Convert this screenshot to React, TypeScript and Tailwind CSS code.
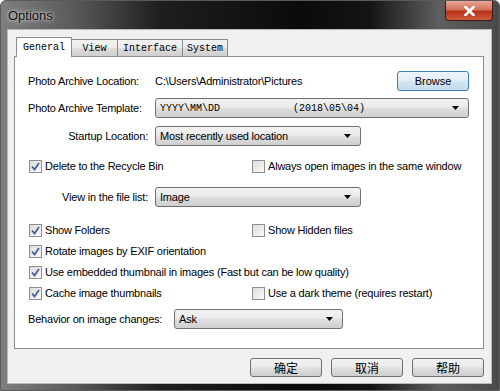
import React from "react";

const font = { fontFamily: '"Liberation Sans", Arial, sans-serif' };
const mono = { fontFamily: '"Liberation Mono", "Courier New", monospace' };

function Check({ checked, label }: { checked?: boolean; label: string }) {
  return (
    <div className="flex items-center gap-[3px] h-[20px]">
      <div className="w-[13px] h-[13px] border border-[#8e8f8f] bg-gradient-to-br from-[#dcdcdc] to-[#fbfbfb] flex items-center justify-center">
        {checked && (
          <svg width="9" height="9" viewBox="0 0 9 9">
            <path d="M1 4.5 L3.5 7.5 L8 1" fill="none" stroke="#4a5f97" strokeWidth="1.8" />
          </svg>
        )}
      </div>
      <span className="text-[11px] tracking-[-0.2px] text-black whitespace-nowrap">{label}</span>
    </div>
  );
}

function Select({ width, children }: { width: string; children: React.ReactNode }) {
  return (
    <div
      className={`${width} h-[20px] rounded-[3px] border border-[#707070] bg-[linear-gradient(#f2f2f2,#ebebeb_45%,#dddddd_55%,#cfcfcf)] flex items-center pl-[4px] pr-[9px]`}
    >
      <div className="flex-1 flex items-center text-[11px] tracking-[-0.2px] text-black whitespace-nowrap">{children}</div>
      <svg width="7" height="4" viewBox="0 0 7 4">
        <path d="M0 0 H7 L3.5 4 Z" fill="#000" />
      </svg>
    </div>
  );
}

function Tab({ label, active, width }: { label: string; active?: boolean; width: string }) {
  if (active) {
    return (
      <div
        className={`${width} h-[20px] -mb-px relative z-10 bg-white border border-b-0 border-[#898c95] flex items-center justify-center text-[10px] text-black`}
        style={mono}
      >
        {label}
      </div>
    );
  }
  return (
    <div
      className={`${width} h-[17px] bg-[linear-gradient(#f2f2f2,#ebebeb_50%,#dddddd_50%,#cfcfcf)] border border-b-0 border-[#898c95] flex items-center justify-center text-[10px] text-black -ml-px`}
      style={mono}
    >
      {label}
    </div>
  );
}

function DlgButton({ label }: { label: string }) {
  return (
    <div
      className="w-[72px] h-[19px] rounded-[3px] border border-[#707070] bg-[linear-gradient(#f2f2f2,#ebebeb_45%,#dddddd_55%,#cfcfcf)] flex items-center justify-center text-[12px] text-black"
      style={{ fontFamily: '"Noto Sans CJK SC", sans-serif' }}
    >
      {label}
    </div>
  );
}

export default function App() {
  return (
    <div
      className="w-[500px] h-[391px] rounded-t-[6px] border border-[#5a5a5a] bg-[linear-gradient(90deg,#7e7e7e_0%,#5c5c5c_14%,#1e1e1e_32%,#0b0b0b_60%,#141414_74%,#5f5f5f_88%,#4a4a4a_100%)] flex flex-col overflow-hidden"
      style={font}
    >
      {/* title bar */}
      <div className="h-[28px] flex items-start justify-between">
        <div className="pl-[7px] pt-[5px] text-[13px] text-[#111] [text-shadow:0_0_6px_#d0d0d0,0_0_3px_#d8d8d8]">Options</div>
        <div className="mr-[6px] w-[48px] h-[20px] rounded-b-[4px] border border-t-0 border-[#3a1a14] bg-[linear-gradient(#e8a493,#d2745d_45%,#b8321a_55%,#cf5a3d)] flex items-center justify-center">
          <svg width="11" height="10" viewBox="0 0 11 10">
            <path d="M1.5 1 L9.5 9 M9.5 1 L1.5 9" stroke="#fff" strokeWidth="2.6" strokeLinecap="square" />
          </svg>
        </div>
      </div>

      {/* client */}
      <div className="ml-[6px] mr-[7px] h-[355px] border border-[#b9b9b9] bg-[#f0f0f0] flex flex-col px-[6px]">
        {/* tabs */}
        <div className="flex items-end h-[26px] pl-[2px]">
          <Tab label="General" active width="w-[56px]" />
          <Tab label="View" width="w-[47px]" />
          <Tab label="Interface" width="w-[66px]" />
          <Tab label="System" width="w-[46px]" />
        </div>

        {/* panel */}
        <div className="h-[293px] w-[470px] bg-white border border-[#898c95] flex flex-col pl-[13px] text-[11px] tracking-[-0.2px] text-black">
          <div className="mt-[14px] h-[20px] flex items-center">
            <div className="w-[127px]">Photo Archive Location:</div>
            <div className="flex-1">C:\Users\Administrator\Pictures</div>
            <div className="mr-[14px] w-[72px] h-[20px] rounded-[3px] border border-[#3c7fb1] bg-[linear-gradient(#eef5fa,#e3eef7_45%,#d2e4f1_55%,#c5dbec)] flex items-center justify-center tracking-normal">
              Browse
            </div>
          </div>

          <div className="mt-[7px] h-[20px] flex items-center">
            <div className="w-[127px]">Photo Archive Template:</div>
            <Select width="w-[314px]">
              <span className="text-[10px] tracking-normal w-[133px]" style={mono}>YYYY\MM\DD</span>
              <span className="text-[10px] tracking-normal" style={mono}>(2018\05\04)</span>
            </Select>
          </div>

          <div className="mt-[8px] h-[20px] flex items-center">
            <div className="w-[127px] text-right pr-[7px]">Startup Location:</div>
            <Select width="w-[206px]">Most recently used location</Select>
          </div>

          <div className="mt-[10px] flex items-center">
            <div className="w-[224px] pl-px">
              <Check checked label="Delete to the Recycle Bin" />
            </div>
            <Check label="Always open images in the same window" />
          </div>

          <div className="mt-[11px] h-[20px] flex items-center">
            <div className="w-[127px] text-right pr-[7px]">View in the file list:</div>
            <Select width="w-[206px]">Image</Select>
          </div>

          <div className="mt-[13px] flex items-center">
            <div className="w-[224px] pl-px">
              <Check checked label="Show Folders" />
            </div>
            <Check label="Show Hidden files" />
          </div>
          <div className="mt-[1px] pl-px">
            <Check checked label="Rotate images by EXIF orientation" />
          </div>
          <div className="mt-[1px] pl-px">
            <Check checked label="Use embedded thumbnail in images (Fast but can be low quality)" />
          </div>
          <div className="mt-[1px] flex items-center">
            <div className="w-[224px] pl-px">
              <Check checked label="Cache image thumbnails" />
            </div>
            <Check label="Use a dark theme (requires restart)" />
          </div>

          <div className="mt-[6px] h-[20px] flex items-center">
            <div className="w-[146px]">Behavior on image changes:</div>
            <Select width="w-[169px]">Ask</Select>
          </div>
        </div>

        {/* dialog buttons */}
        <div className="mt-[9px] flex justify-end gap-[9px] pr-[1px]">
          <DlgButton label="确定" />
          <DlgButton label="取消" />
          <DlgButton label="帮助" />
        </div>
      </div>
    </div>
  );
}
